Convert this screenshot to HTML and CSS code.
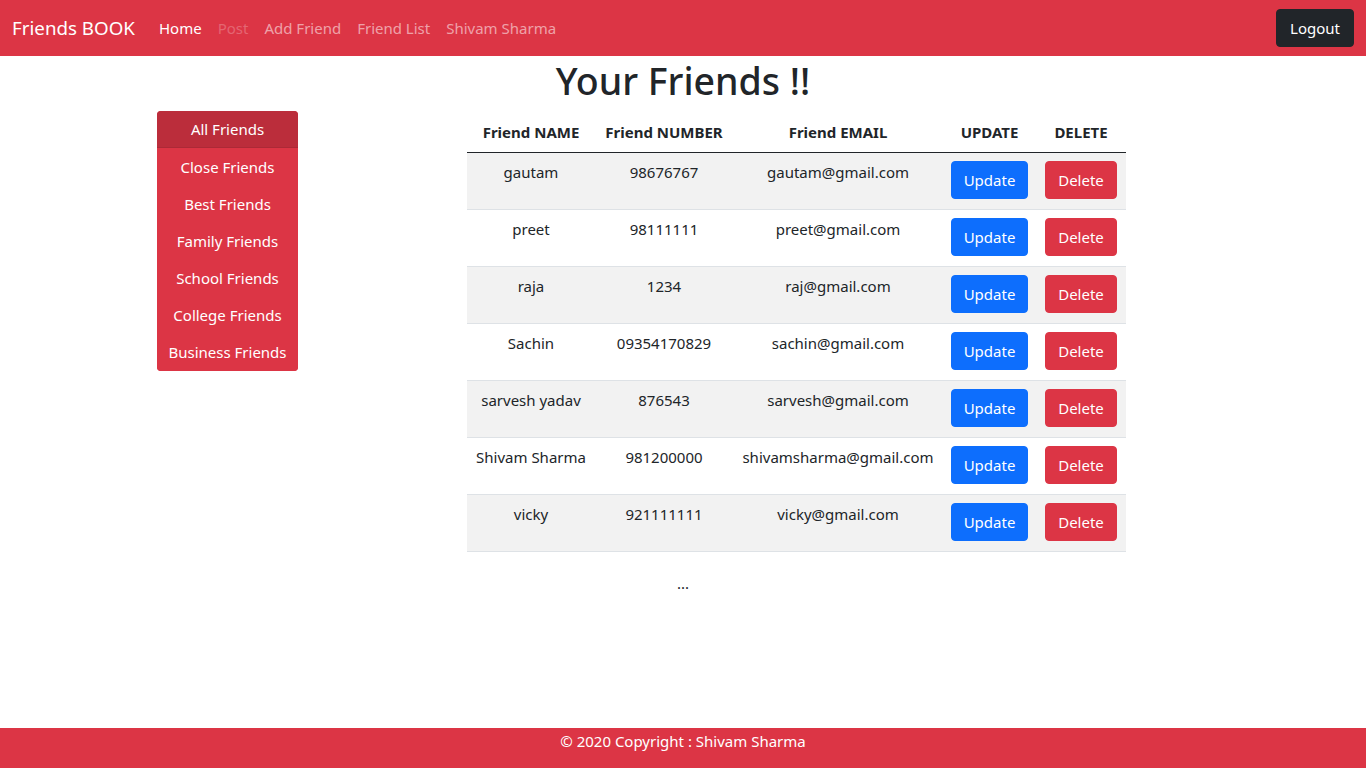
FILE: index.html
```html
<!DOCTYPE html>
<html lang="en">
<head>
<meta charset="utf-8">
<title>Friends BOOK</title>
<link rel="stylesheet" href="styles.css">
</head>
<body>
<nav class="navbar">
  <a class="brand" href="#">Friends BOOK</a>
  <ul class="nav-links">
    <li><a class="nav-link active" href="#">Home</a></li>
    <li><a class="nav-link disabled" href="#">Post</a></li>
    <li><a class="nav-link" href="#">Add Friend</a></li>
    <li><a class="nav-link" href="#">Friend List</a></li>
    <li><a class="nav-link" href="#">Shivam Sharma</a></li>
  </ul>
  <button class="btn btn-dark logout">Logout</button>
</nav>

<main class="main">
  <h1 class="title">Your Friends !!</h1>
  <div class="content-row">
    <div class="side-col">
      <div class="list-group">
        <a class="list-item active" href="#">All Friends</a>
        <a class="list-item" href="#">Close Friends</a>
        <a class="list-item" href="#">Best Friends</a>
        <a class="list-item" href="#">Family Friends</a>
        <a class="list-item" href="#">School Friends</a>
        <a class="list-item" href="#">College Friends</a>
        <a class="list-item" href="#">Business Friends</a>
      </div>
    </div>
    <div class="table-col">
      <table class="friends">
        <colgroup>
          <col class="c-name"><col class="c-num"><col class="c-email"><col class="c-upd"><col class="c-del">
        </colgroup>
        <thead>
          <tr><th>Friend NAME</th><th>Friend NUMBER</th><th>Friend EMAIL</th><th>UPDATE</th><th>DELETE</th></tr>
        </thead>
        <tbody>
          <tr><td>gautam</td><td>98676767</td><td>gautam@gmail.com</td><td><button class="btn btn-primary">Update</button></td><td><button class="btn btn-danger">Delete</button></td></tr>
          <tr><td>preet</td><td>98111111</td><td>preet@gmail.com</td><td><button class="btn btn-primary">Update</button></td><td><button class="btn btn-danger">Delete</button></td></tr>
          <tr><td>raja</td><td>1234</td><td>raj@gmail.com</td><td><button class="btn btn-primary">Update</button></td><td><button class="btn btn-danger">Delete</button></td></tr>
          <tr><td>Sachin</td><td>09354170829</td><td>sachin@gmail.com</td><td><button class="btn btn-primary">Update</button></td><td><button class="btn btn-danger">Delete</button></td></tr>
          <tr><td>sarvesh yadav</td><td>876543</td><td>sarvesh@gmail.com</td><td><button class="btn btn-primary">Update</button></td><td><button class="btn btn-danger">Delete</button></td></tr>
          <tr><td>Shivam Sharma</td><td>981200000</td><td>shivamsharma@gmail.com</td><td><button class="btn btn-primary">Update</button></td><td><button class="btn btn-danger">Delete</button></td></tr>
          <tr><td>vicky</td><td>921111111</td><td>vicky@gmail.com</td><td><button class="btn btn-primary">Update</button></td><td><button class="btn btn-danger">Delete</button></td></tr>
        </tbody>
      </table>
    </div>
  </div>
  <p class="more">...</p>
</main>

<footer class="footer">© 2020 Copyright : Shivam Sharma</footer>
</body>
</html>
```

FILE: styles.css
```css
* { box-sizing: border-box; }
html, body { margin: 0; padding: 0; }
body {
  font-family: "Noto Sans", "Open Sans", sans-serif;
  font-size: 15px;
  line-height: 24px;
  color: #212529;
  background: #fff;
  min-height: 100vh;
  display: flex;
  flex-direction: column;
}
a { text-decoration: none; }

.navbar {
  height: 56px;
  background: #dc3545;
  display: flex;
  align-items: center;
  padding: 0 12px;
}
.brand {
  color: #fff;
  font-size: 18.75px;
  line-height: 30px;
  margin-right: 16px;
}
.nav-links {
  list-style: none;
  margin: 0;
  padding: 0;
  display: flex;
  flex: 1;
}
.nav-link {
  display: block;
  padding: 8px;
  color: rgba(255,255,255,.55);
}
.nav-link.active { color: #fff; }
.nav-link.disabled { color: rgba(255,255,255,.25); }

.btn {
  font-family: inherit;
  font-size: 15px;
  line-height: 24px;
  padding: 6px 12px;
  border: 1px solid transparent;
  border-radius: 4px;
  color: #fff;
  cursor: pointer;
}
.btn-dark { background: #212529; border-color: #212529; }
.btn-primary { background: #0d6efd; border-color: #0d6efd; }
.btn-danger { background: #dc3545; border-color: #dc3545; }
.logout { padding: 6px 13px; }

.main { flex: 1; }
.title {
  margin: 0 0 7px;
  font-size: 37.5px;
  line-height: 50px;
  font-weight: 500;
  text-align: center;
}
.content-row { display: flex; margin-top: -2px; }
.side-col {
  width: 455px;
  display: flex;
  justify-content: center;
  align-items: flex-start;
}
.list-group {
  width: 141px;
  display: flex;
  flex-direction: column;
  border-radius: 4px;
  overflow: hidden;
  background: #dc3545;
}
.list-item {
  height: 37px;
  display: flex;
  align-items: center;
  justify-content: center;
  color: #fff;
  background: #dc3545;
}
.list-item:last-child { height: 38px; }
.list-item.active { background: #bb2d3b; border-bottom: 1px solid rgba(0,0,0,.08); }

.table-col { padding-left: 12px; }
.friends {
  border-collapse: collapse;
  table-layout: fixed;
  width: 659px;
  text-align: center;
}
.c-name { width: 128px; }
.c-num { width: 138px; }
.c-email { width: 210px; }
.c-upd { width: 93px; }
.c-del { width: 90px; }
.friends th {
  font-weight: 700;
  padding: 9px 0 7px;
  height: 41px;
  border-bottom: 1px solid #212529;
  vertical-align: top;
}
.friends td {
  padding: 8px 0;
  height: 57px;
  vertical-align: top;
  border-bottom: 1px solid #dee2e6;
  white-space: nowrap;
}
.friends td:nth-child(-n+3) { padding-top: 7px; }
.friends tbody tr:nth-child(odd) td { background: #f2f2f2; }
.friends td .btn { display: block; margin: 0 auto; }

.more {
  margin: 19px 0 0;
  text-align: center;
}

.footer {
  height: 40px;
  background: #dc3545;
  color: #fff;
  text-align: center;
  line-height: 24px;
  padding-top: 1px;
}
```
